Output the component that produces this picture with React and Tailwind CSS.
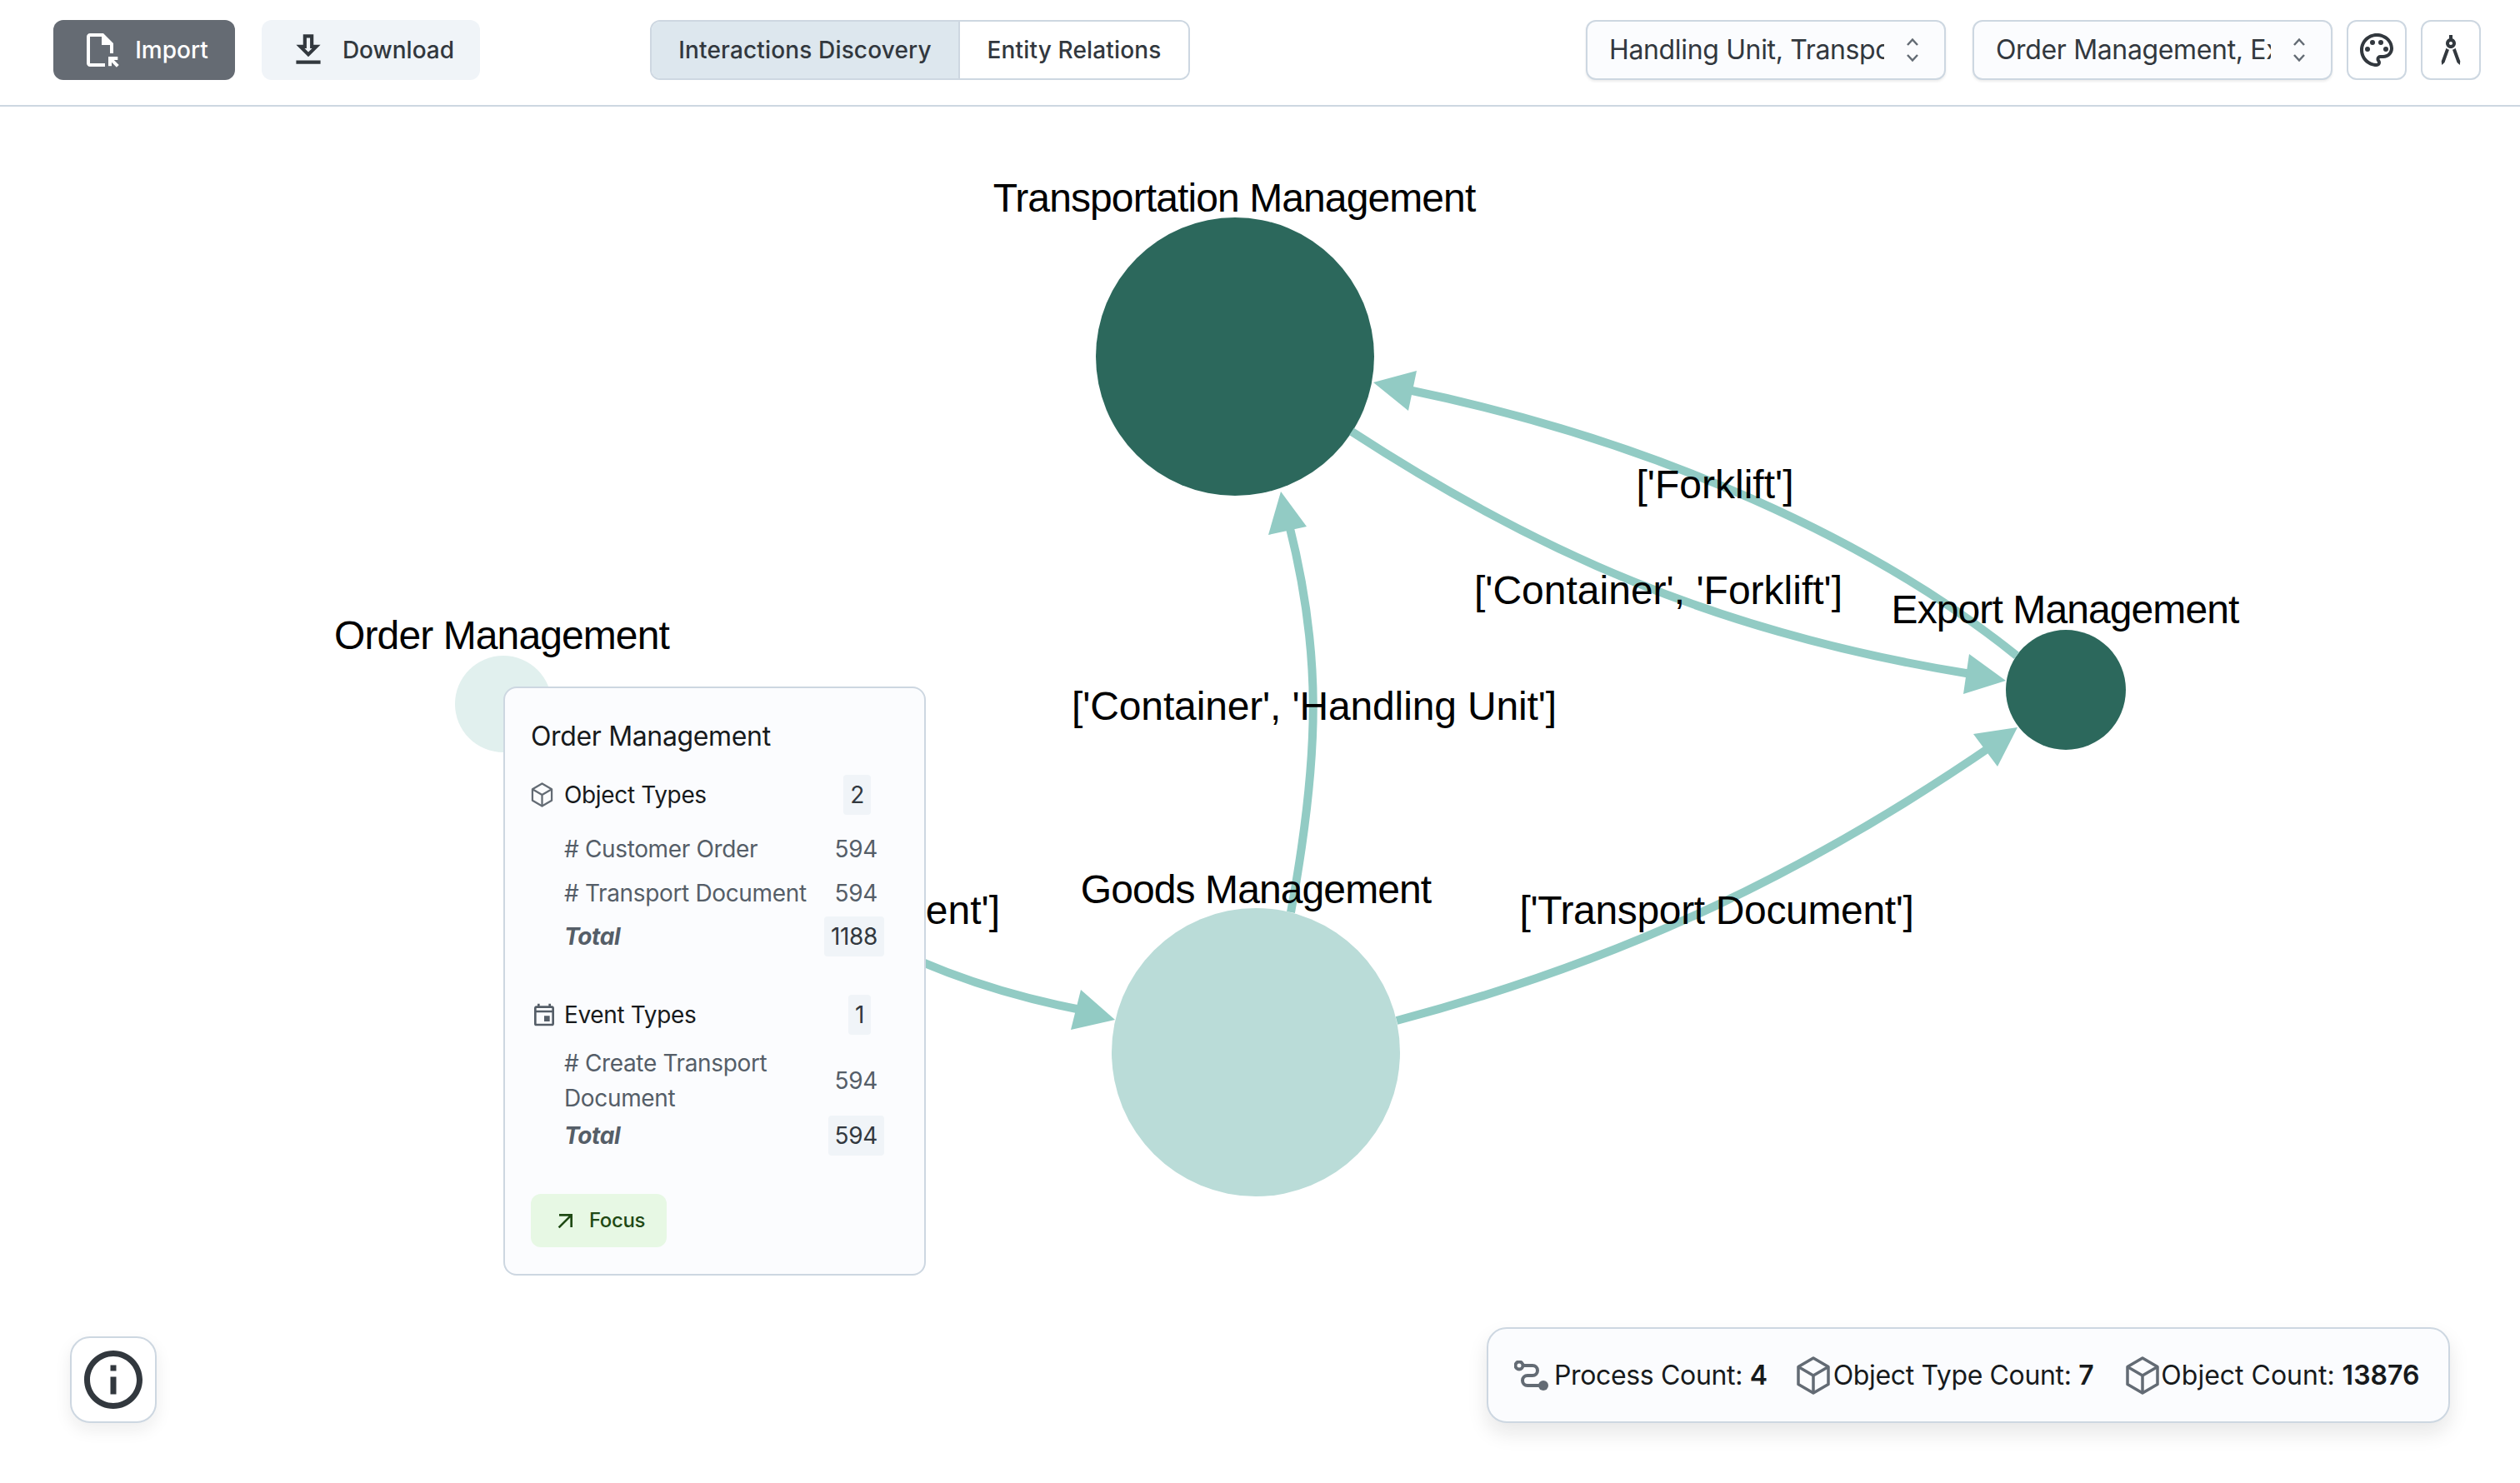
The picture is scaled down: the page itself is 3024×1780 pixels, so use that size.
import {
  MdOutlineFileOpen,
  MdOutlineDownload,
  MdOutlinePalette,
  MdOutlineArchitecture,
  MdOutlineInfo,
  MdOutlineEvent,
  MdArrowOutward,
} from 'react-icons/md'

const EDGE = '#92cbc4'

const edges = [
  { d: 'M1000 1100 Q 1130 1180 1297 1212', head: '1338,1224 1297,1188 1285,1236' },
  { d: 'M1549 1095 C 1585 900 1585 780 1547 630', head: '1537,590 1522,642 1568,632' },
  { d: 'M1676 1225 C 1960 1150 2180 1040 2395 892', head: '2421,873 2368,881 2397,920' },
  { d: 'M2420 787 C 2250 650 1990 530 1690 468', head: '1648,459 1700,445 1690,493' },
  { d: 'M1622 518 C 1840 660 2060 760 2365 809', head: '2407,817 2363,785 2356,833' },
]

const labels = [
  { x: 1481, y: 254, text: 'Transportation Management', spacing: -0.9 },
  { x: 602, y: 779, text: 'Order Management', spacing: -0.9 },
  { x: 1507, y: 1084, text: 'Goods Management', spacing: -0.9 },
  { x: 2478, y: 748, text: 'Export Management', spacing: -0.9 },
  { x: 2058, y: 598, text: "['Forklift']", spacing: 0 },
  { x: 1990, y: 725, text: "['Container', 'Forklift']", spacing: 0 },
  { x: 1577, y: 864, text: "['Container', 'Handling Unit']", spacing: -0.15 },
  { x: 2060, y: 1109, text: "['Transport Document']", spacing: -0.35 },
  { x: 1200, y: 1109, text: "ent']", anchor: 'end', spacing: 0 },
]

function Graph() {
  return (
    <svg viewBox="0 128 3024 1652" className="absolute inset-0 w-full h-full">
      <circle cx="1482" cy="428" r="167" fill="#2c685c" />
      <circle cx="604" cy="845" r="58" fill="#e1f0ee" />
      <circle cx="1507" cy="1263" r="173" fill="#badcd8" />
      <circle cx="2479" cy="828" r="72" fill="#2c685c" />
      {edges.map((e) => (
        <g key={e.d}>
          <path d={e.d} fill="none" stroke={EDGE} strokeWidth="10" />
          <polygon points={e.head} fill={EDGE} />
        </g>
      ))}
      {labels.map((l, i) => (
        <text key={i} x={l.x} y={l.y} textAnchor={l.anchor || 'middle'} fontSize="48" letterSpacing={l.spacing} fill="#000" fontFamily="'Liberation Sans', Arial, sans-serif">
          {l.text}
        </text>
      ))}
    </svg>
  )
}

function Selector() {
  return (
    <svg viewBox="0 0 16 30" width="16" height="30" fill="none" stroke="#636b74" strokeWidth="2.5" className="ml-auto mr-[4px]">
      <path d="M2 9 L8 2.5 L14 9" />
      <path d="M2 21 L8 27.5 L14 21" />
    </svg>
  )
}

function Cube({ w, h, stroke }) {
  return (
    <svg viewBox="0 0 42 46" width={w} height={h} fill="none" stroke="#636b74" strokeWidth={stroke} strokeLinejoin="round">
      <path d="M21 2 L39 12.5 V33.5 L21 44 L3 33.5 V12.5 Z" />
      <path d="M3 12.5 L21 23 L39 12.5 M21 23 V44" />
    </svg>
  )
}

function SelectBox({ value }) {
  return (
    <div className="w-[432px] h-[72px] flex items-center pl-[26px] pr-[26px] bg-[#fbfcfe] border-2 border-[#cdd7e1] rounded-[12px] shadow-[0_2px_3px_rgba(21,21,21,0.08)]">
      <div className="w-[330px] overflow-hidden whitespace-nowrap text-[32px] tracking-[-0.35px] text-[#32383e]">{value}</div>
      <Selector />
    </div>
  )
}

function IconButton({ children }) {
  return (
    <button className="w-[72px] h-[72px] flex items-center justify-center bg-white border-2 border-[#cdd7e1] rounded-[12px] text-[#32383e]">
      {children}
    </button>
  )
}

function Header() {
  return (
    <header className="h-[128px] shrink-0 flex items-start pt-[24px] pl-[64px] pr-[47px] border-b-2 border-[#cdd7e1] bg-white">
      <div className="w-[716px] flex gap-[32px]">
        <button className="h-[72px] w-[218px] flex items-center justify-center gap-[18px] rounded-[12px] bg-[#656b73] text-white text-[28px] font-medium">
          <MdOutlineFileOpen size={48} />
          Import
        </button>
        <button className="h-[72px] w-[262px] flex items-center justify-center gap-[16px] rounded-[12px] bg-[#f0f4f8] text-[#32383e] text-[28px] font-medium">
          <MdOutlineDownload size={50} />
          Download
        </button>
      </div>
      <div className="h-[72px] w-[648px] flex border-2 border-[#cdd7e1] rounded-[12px] overflow-hidden text-[28px] font-medium tracking-[0.15px] text-[#32383e]">
        <div className="w-[370px] flex items-center justify-center bg-[#dde7ee] border-r-2 border-[#cdd7e1]">Interactions Discovery</div>
        <div className="flex-1 flex items-center justify-center bg-white">Entity Relations</div>
      </div>
      <div className="ml-auto flex items-center gap-[17px]">
        <div className="flex gap-[32px]">
          <SelectBox value="Handling Unit, Transport Document" />
          <SelectBox value="Order Management, Export Management" />
        </div>
        <IconButton><MdOutlinePalette size={48} /></IconButton>
        <IconButton><MdOutlineArchitecture size={48} /></IconButton>
      </div>
    </header>
  )
}

function Row({ label, value }) {
  return (
    <div className="flex items-center justify-between pl-[40px] pr-[9px] text-[28px] text-[#555e68] leading-[42px]">
      <div className="w-[320px]">{label}</div>
      <div>{value}</div>
    </div>
  )
}

function TotalRow({ value }) {
  return (
    <div className="flex items-center justify-between pl-[40px] text-[28px] h-[48px]">
      <div className="italic font-bold text-[#555e68]">Total</div>
      <div className="px-[8px] h-[48px] flex items-center bg-[#f0f4f8] rounded-[4px] text-[#32383e] mr-[1px]">{value}</div>
    </div>
  )
}

function SectionHead({ icon, label, value }) {
  return (
    <div className="flex items-center h-[48px] text-[28px] text-[#171a1c]">
      <div className="w-[40px] text-[#555e68]">{icon}</div>
      <div>{label}</div>
      <div className="ml-auto mr-[17px] px-[8px] h-[48px] flex items-center bg-[#f0f4f8] rounded-[4px] text-[#32383e]">{value}</div>
    </div>
  )
}

function NodePanel() {
  return (
    <div className="absolute left-[604px] top-[696px] w-[507px] h-[707px] bg-[#fbfcfe] border-2 border-[#cdd7e1] rounded-[16px] pl-[31px] pr-[47px] pt-[34px] tracking-[-0.35px]">
      <div className="text-[32px] leading-[48px] text-[#171a1c]">Order Management</div>
      <div className="mt-[22px]">
        <SectionHead icon={<Cube w={27} h={30} stroke={3.5} />} label="Object Types" value="2" />
        <div className="mt-[20px] flex flex-col gap-[11px]">
          <Row label="# Customer Order" value="594" />
          <Row label="# Transport Document" value="594" />
        </div>
        <div className="mt-[7px]"><TotalRow value="1188" /></div>
      </div>
      <div className="mt-[46px]">
        <SectionHead icon={<MdOutlineEvent size={32} />} label="Event Types" value="1" />
        <div className="mt-[13px]">
          <Row label="# Create Transport Document" value="594" />
        </div>
        <TotalRow value="594" />
      </div>
      <button className="mt-[46px] w-[163px] h-[64px] flex items-center justify-center gap-[12px] rounded-[12px] bg-[#e7f8e4] text-[#1f4a14] text-[24px] font-medium">
        <MdArrowOutward size={32} />
        Focus
      </button>
    </div>
  )
}

function RouteIcon() {
  return (
    <svg viewBox="0 0 42 36" width="42" height="36" fill="none" stroke="#636b74" strokeWidth="4">
      <circle cx="6" cy="6" r="4.5" />
      <path d="M11 6 H22 A6 6 0 0 1 22 18 H16 A6 6 0 0 0 16 30 H32" />
      <circle cx="35" cy="30" r="6" fill="#636b74" stroke="none" />
    </svg>
  )
}

function Stats() {
  return (
    <div className="absolute left-[1784px] top-[1465px] w-[1156px] h-[115px] flex items-center pl-[31px] bg-[#fbfcfe] border-2 border-[#cdd7e1] rounded-[24px] shadow-[0_12px_24px_rgba(21,21,21,0.1)] text-[32px] tracking-[-0.35px] text-[#171a1c]">
      <RouteIcon />
      <span className="ml-[6px]">Process Count: <b className="font-semibold">4</b></span>
      <span className="ml-[34px]"><Cube w={42} h={46} stroke={3.5} /></span>
      <span className="ml-[3px]">Object Type Count: <b className="font-semibold">7</b></span>
      <span className="ml-[38px]"><Cube w={42} h={46} stroke={3.5} /></span>
      <span className="ml-[1px] tracking-normal">Object Count: <b className="font-semibold">13876</b></span>
    </div>
  )
}

export default function App() {
  return (
    <div className="h-screen flex flex-col bg-white overflow-hidden font-['Inter',sans-serif]">
      <Header />
      <main className="relative flex-1">
        <Graph />
        <NodePanel />
        <button className="absolute left-[84px] top-[1476px] w-[104px] h-[104px] flex items-center justify-center bg-white border-2 border-[#cdd7e1] rounded-[24px] shadow-[0_8px_20px_rgba(21,21,21,0.08)] text-[#32383e]">
          <MdOutlineInfo size={84} />
        </button>
        <Stats />
      </main>
    </div>
  )
}
